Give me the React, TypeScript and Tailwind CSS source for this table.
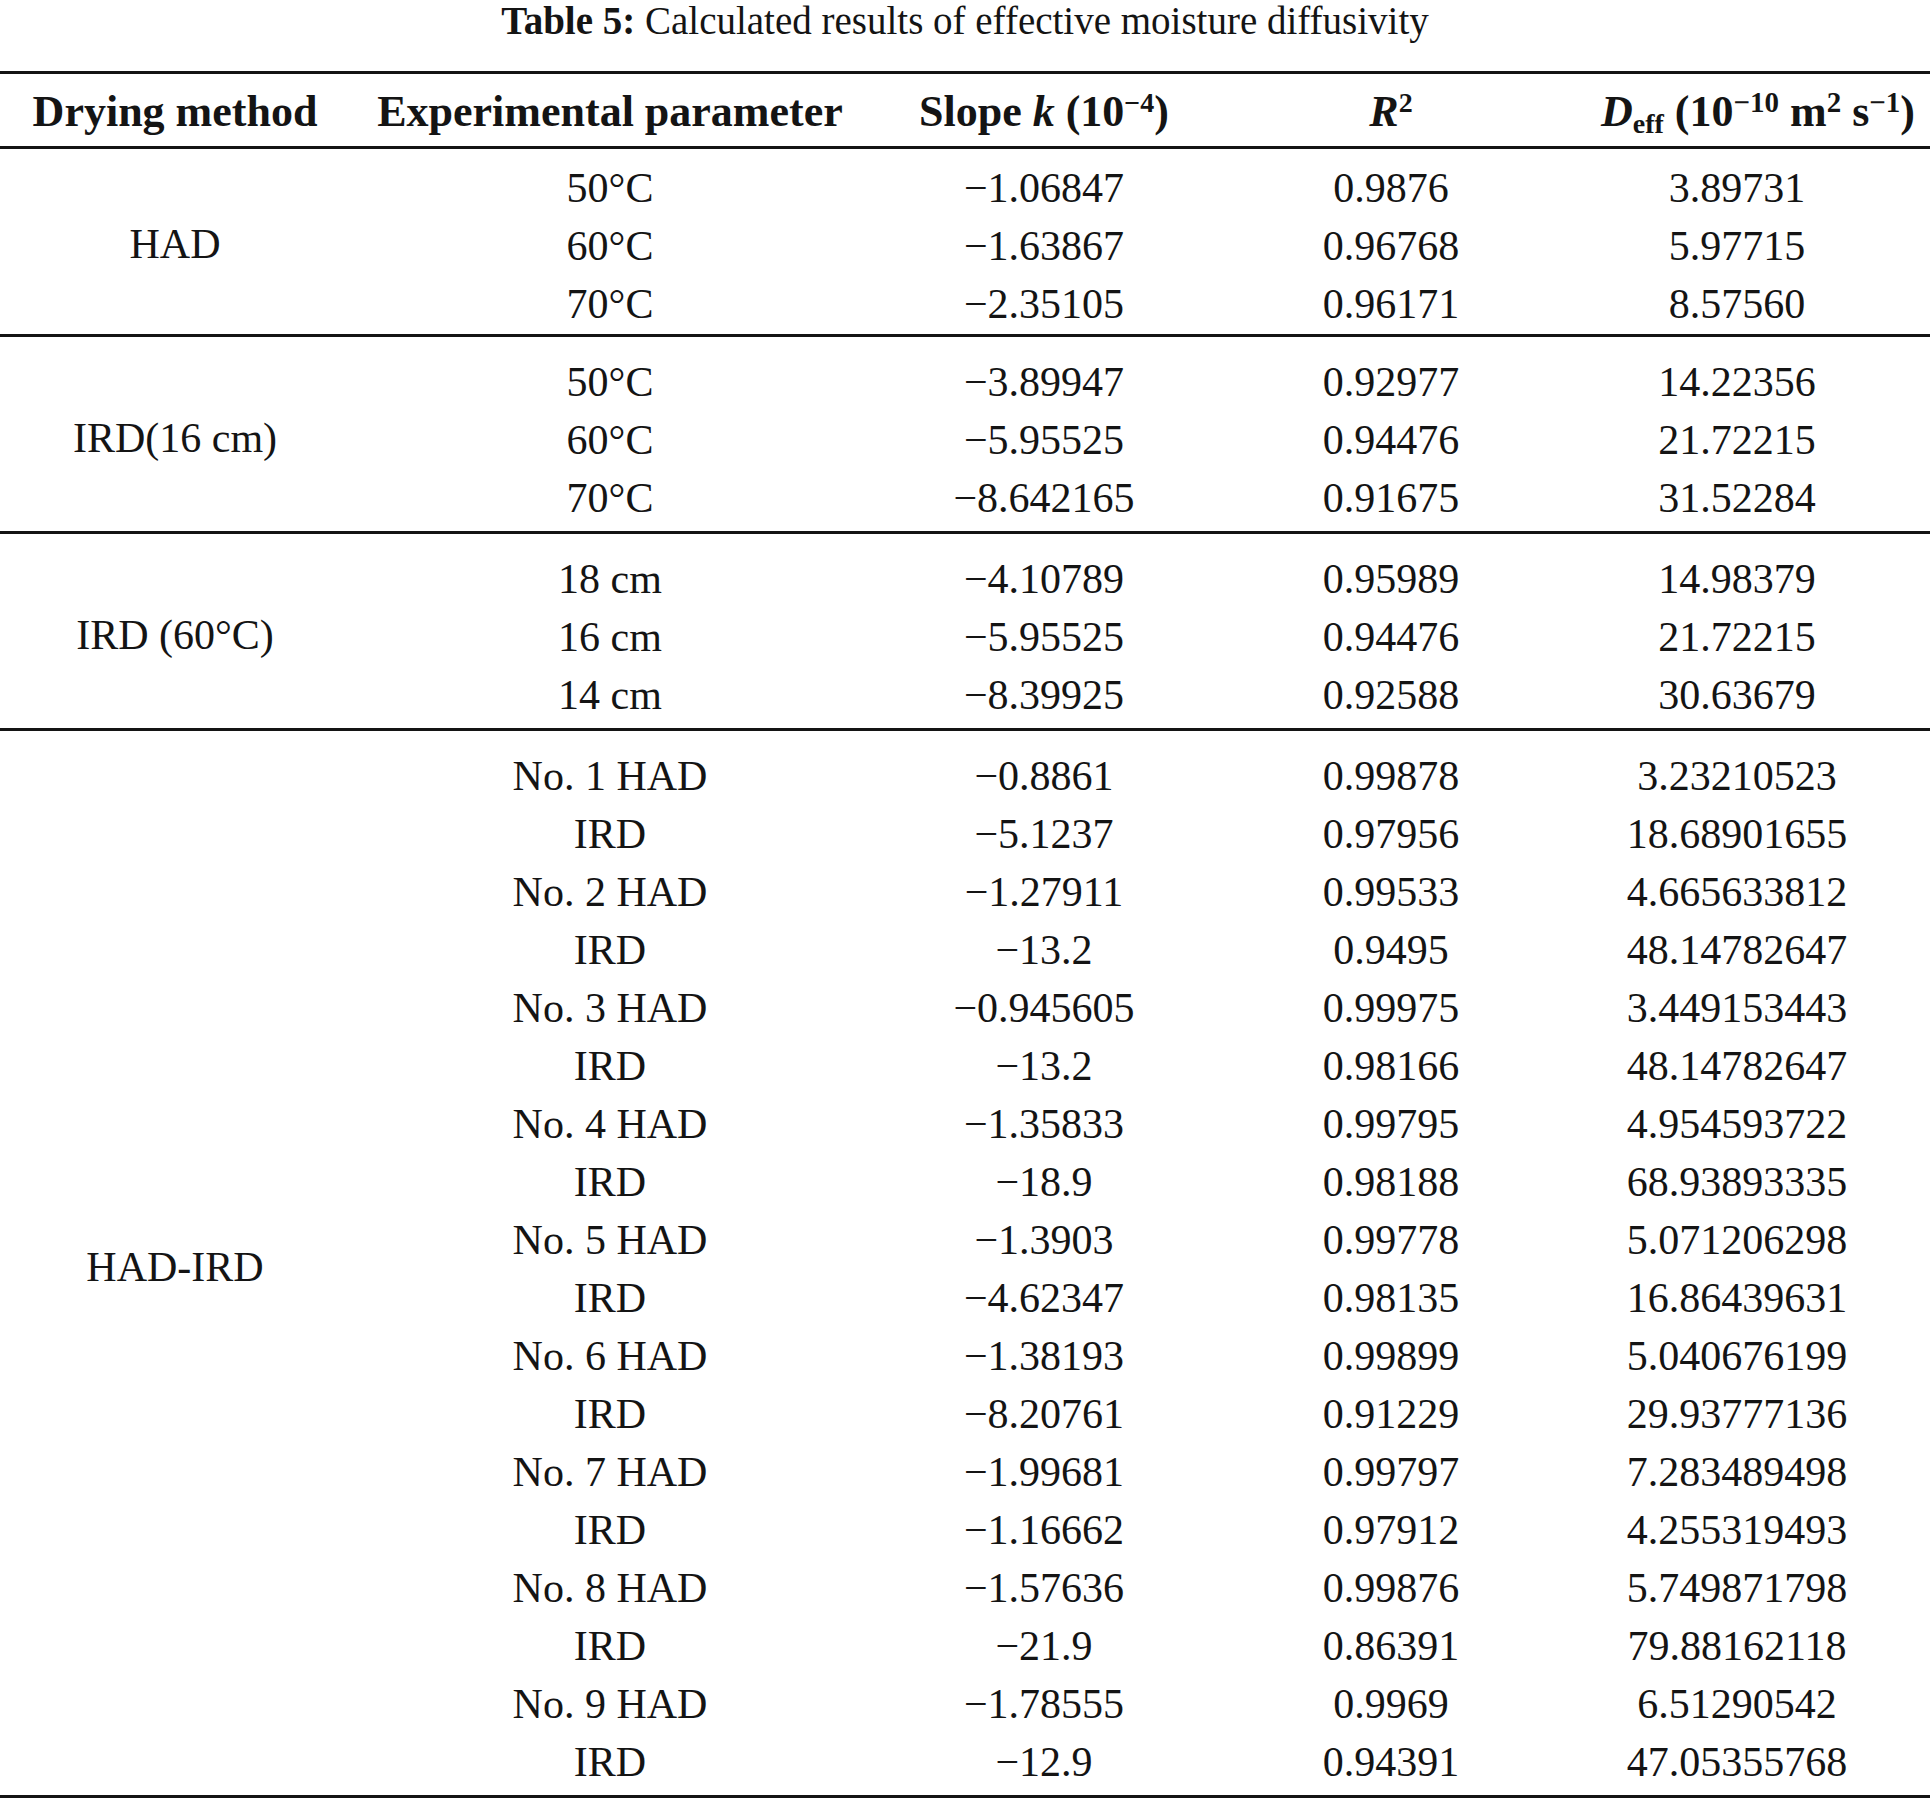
import React from "react";

type Row = [string, string, string, string];

interface Group {
  method: string;
  rows: Row[];
  first?: boolean;
}

const groups: Group[] = [
  {
    method: "HAD",
    first: true,
    rows: [
      ["50°C", "−1.06847", "0.9876", "3.89731"],
      ["60°C", "−1.63867", "0.96768", "5.97715"],
      ["70°C", "−2.35105", "0.96171", "8.57560"],
    ],
  },
  {
    method: "IRD(16 cm)",
    rows: [
      ["50°C", "−3.89947", "0.92977", "14.22356"],
      ["60°C", "−5.95525", "0.94476", "21.72215"],
      ["70°C", "−8.642165", "0.91675", "31.52284"],
    ],
  },
  {
    method: "IRD (60°C)",
    rows: [
      ["18 cm", "−4.10789", "0.95989", "14.98379"],
      ["16 cm", "−5.95525", "0.94476", "21.72215"],
      ["14 cm", "−8.39925", "0.92588", "30.63679"],
    ],
  },
  {
    method: "HAD-IRD",
    rows: [
      ["No. 1 HAD", "−0.8861", "0.99878", "3.23210523"],
      ["IRD", "−5.1237", "0.97956", "18.68901655"],
      ["No. 2 HAD", "−1.27911", "0.99533", "4.665633812"],
      ["IRD", "−13.2", "0.9495", "48.14782647"],
      ["No. 3 HAD", "−0.945605", "0.99975", "3.449153443"],
      ["IRD", "−13.2", "0.98166", "48.14782647"],
      ["No. 4 HAD", "−1.35833", "0.99795", "4.954593722"],
      ["IRD", "−18.9", "0.98188", "68.93893335"],
      ["No. 5 HAD", "−1.3903", "0.99778", "5.071206298"],
      ["IRD", "−4.62347", "0.98135", "16.86439631"],
      ["No. 6 HAD", "−1.38193", "0.99899", "5.040676199"],
      ["IRD", "−8.20761", "0.91229", "29.93777136"],
      ["No. 7 HAD", "−1.99681", "0.99797", "7.283489498"],
      ["IRD", "−1.16662", "0.97912", "4.255319493"],
      ["No. 8 HAD", "−1.57636", "0.99876", "5.749871798"],
      ["IRD", "−21.9", "0.86391", "79.88162118"],
      ["No. 9 HAD", "−1.78555", "0.9969", "6.51290542"],
      ["IRD", "−12.9", "0.94391", "47.05355768"],
    ],
  },
];

const Rule = () => <div className="h-[3px] w-full bg-[#141414]" />;

const cols = "grid grid-cols-[520px_348px_346px_366px]";

function GroupBlock({ group }: { group: Group }) {
  return (
    <div className={`flex ${group.first ? "pt-[8px] pb-[3px]" : "pt-[14px] pb-[6px]"}`}>
      <div className="w-[350px] flex items-center justify-center">{group.method}</div>
      <div className="flex flex-col">
        {group.rows.map((r, i) => (
          <div key={i} className={`${cols} h-[58px] items-center text-center`}>
            <div>{r[0]}</div>
            <div>{r[1]}</div>
            <div>{r[2]}</div>
            <div className="pr-5">{r[3]}</div>
          </div>
        ))}
      </div>
    </div>
  );
}

export default function App() {
  return (
    <div className="w-[1930px] bg-white text-[#141414] font-['Liberation_Serif',serif]">
      <div className="h-[71px] flex justify-center">
        <div className="text-[39px] leading-[42px]">
          <span className="font-bold">Table 5:</span> Calculated results of effective moisture diffusivity
        </div>
      </div>
      <Rule />
      <div className="flex h-[72px] items-center pt-[4px] text-[44px] font-bold">
        <div className="w-[350px] text-center">Drying method</div>
        <div className="w-[520px] text-center">Experimental parameter</div>
        <div className="w-[348px] text-center">
          Slope <i>k</i> (10<sup className="text-[28px]">−4</sup>)
        </div>
        <div className="w-[346px] text-center">
          <i>R</i>
          <sup className="text-[28px]">2</sup>
        </div>
        <div className="w-[366px] text-center pl-[22px] whitespace-nowrap">
          <i>D</i>
          <sub className="text-[28px]">eff</sub> (10<sup className="text-[29px]">−10</sup>&nbsp;m
          <sup className="text-[29px]">2</sup>&nbsp;s<sup className="text-[29px]">−1</sup>)
        </div>
      </div>
      <Rule />
      <div className="text-[42px]">
        {groups.map((g, i) => (
          <React.Fragment key={i}>
            <GroupBlock group={g} />
            <Rule />
          </React.Fragment>
        ))}
      </div>
    </div>
  );
}
